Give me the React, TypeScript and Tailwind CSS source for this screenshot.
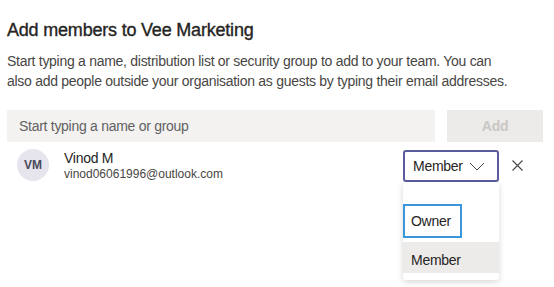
const font = { fontFamily: '"Liberation Sans", Arial, sans-serif' }

function Chevron() {
  return (
    <svg width="16" height="9" viewBox="0 0 16 9" fill="none" className="shrink-0">
      <path d="M1 1l7 7 7-7" stroke="#484644" strokeWidth="1" />
    </svg>
  )
}

function Cross() {
  return (
    <svg width="11" height="11" viewBox="0 0 11 11" fill="none" className="shrink-0">
      <path d="M0.5 0.5l10 10M10.5 0.5l-10 10" stroke="#484644" strokeWidth="1.1" />
    </svg>
  )
}

export default function App() {
  return (
    <div
      className="relative w-[554px] h-[287px] overflow-hidden bg-white pl-[7px] pr-[11px] text-[#252423] tracking-[-0.28px]"
      style={font}
    >
      <h1 className="mt-[18px] text-[18px] leading-[24px] font-normal tracking-[-0.2px] text-[#252423] [-webkit-text-stroke:0.35px_#252423]">
        Add members to Vee Marketing
      </h1>
      <p className="mt-[9px] text-[14px] leading-[20px] text-[#484644]">
        Start typing a name, distribution list or security group to add to your team. You can
        <br />
        also add people outside your organisation as guests by typing their email addresses.
      </p>

      <div className="mt-[19px] flex gap-3">
        <div className="flex-1 h-8 bg-[#f3f2f1] flex items-center px-3 text-[14px] text-[#616161]">
          Start typing a name or group
        </div>
        <button
          type="button"
          className="w-[96px] h-8 bg-[#edebe9] text-[14px] font-bold text-[#c8c6c4]"
        >
          Add
        </button>
      </div>

      <div className="mt-[6px] flex items-center">
        <div className="ml-[10px] w-8 h-8 rounded-full bg-[#e6e5ee] flex items-center justify-center text-[12px] font-bold tracking-normal text-[#4a4a5a]">
          VM
        </div>
        <div className="ml-[15px] flex-1 min-w-0">
          <p className="text-[14px] leading-[18px] text-[#252423]">Vinod M</p>
          <p className="text-[12px] leading-[15px] tracking-normal text-[#484644]">vinod06061996@outlook.com</p>
        </div>
        <div className="relative mt-[2px]">
          <div className="w-[96px] h-8 border-2 border-[#5b5c9d] rounded-[3px] flex items-center pl-[8px] gap-[6px] text-[14px] text-[#252423]">
            Member
            <Chevron />
          </div>
          <div className="absolute left-0 top-8 w-[96px] h-[98px] bg-white rounded-[3px] shadow-[0_2px_6px_rgba(0,0,0,0.16)] pt-[22px]">
            <div className="w-[59px] h-[34px] border-2 border-[#3a96dd] flex items-center pl-[6px] text-[14px] text-[#252423]">
              Owner
            </div>
            <div className="mt-[4px] h-[31px] bg-[#edebe9] flex items-end pb-[2px] pl-[8px] text-[14px] text-[#252423]">
              Member
            </div>
          </div>
        </div>
        <div className="ml-[13px] mr-[20px]">
          <Cross />
        </div>
      </div>
    </div>
  )
}
